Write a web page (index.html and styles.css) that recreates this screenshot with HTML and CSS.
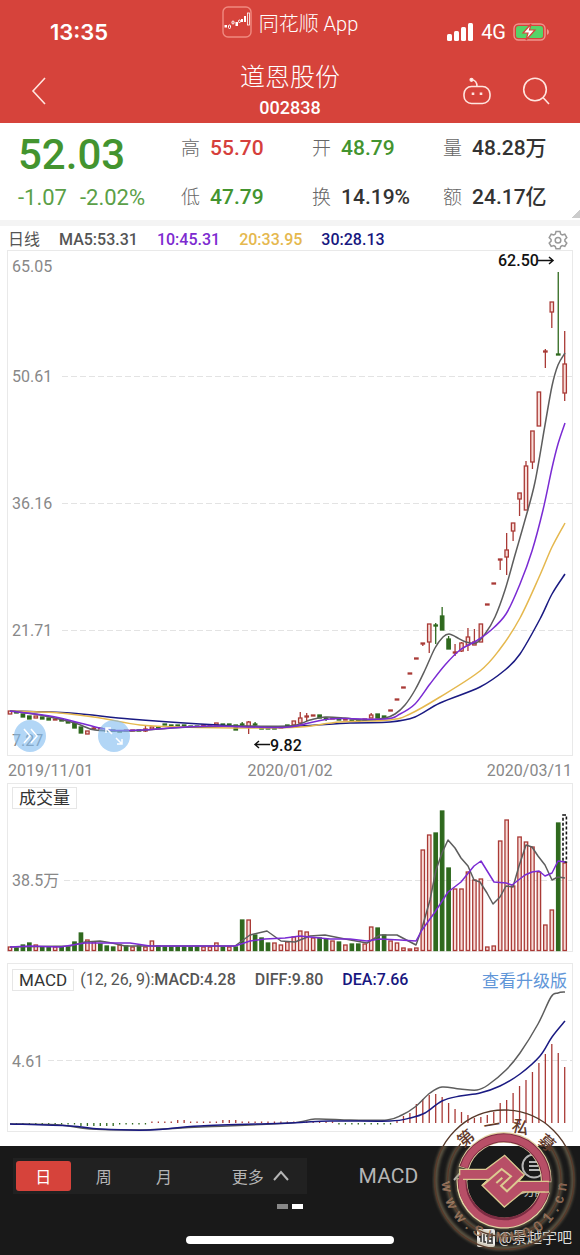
FILE: index.html
```html
<!DOCTYPE html>
<html lang="zh-CN">
<head>
<meta charset="utf-8">
<meta name="viewport" content="width=device-width, initial-scale=1">
<title>道恩股份 002838</title>
<link rel="stylesheet" href="styles.css">
</head>
<body>
<header class="top">
  <div class="status">
    <span class="clock">13:35</span>
    <span class="app">
      <svg class="app-logo" viewBox="0 0 30 32" aria-hidden="true">
        <rect x="1" y="1" width="28" height="30" rx="5" fill="none" stroke="#f08a80" stroke-width="1.4"/>
        <g fill="#fff"><rect x="2.5" y="19" width="2.5" height="2.5"/><rect x="13.5" y="16" width="2.5" height="4"/><rect x="19" y="13" width="2" height="3"/><rect x="22" y="10" width="2" height="6"/></g>
        <g fill="none" stroke="#fff"><rect x="6.5" y="19" width="2" height="3.5" rx="1"/><rect x="10" y="15" width="2" height="3" rx="1"/><rect x="16.5" y="14" width="2" height="2.5" rx="1"/><rect x="25.5" y="7" width="2" height="12" stroke-width=".8"/></g>
      </svg>
      同花顺 App
    </span>
    <span class="signal">
      <svg width="27" height="18" viewBox="0 0 27 18" aria-hidden="true"><g fill="#fff"><rect x="0" y="11" width="5" height="7" rx="1.5"/><rect x="7" y="8" width="5" height="10" rx="1.5"/><rect x="14" y="4" width="5" height="14" rx="1.5"/><rect x="21" y="0" width="5" height="18" rx="1.5"/></g></svg>
      <span class="net">4G</span>
      <svg width="37" height="18" viewBox="0 0 37 18" aria-hidden="true"><rect x="1" y="1" width="31" height="16" rx="4.5" fill="none" stroke="#f0958e" stroke-width="1.4"/><rect x="3" y="3" width="27" height="12" rx="2.5" fill="#55d468"/><path d="M34 6v6q2-1 2-3t-2-3z" fill="#f0958e"/><path d="M18 1 10 10h5l-2 7 9-10h-5.500z" fill="#fff" stroke="#d6433b" stroke-width="1.200"/></svg>
    </span>
  </div>
  <nav class="nav">
    <button class="icon-btn back" aria-label="返回"><svg width="18" height="30" viewBox="0 0 18 30"><path d="M15 2 3 15l12 13"/></svg></button>
    <h1 class="title">道恩股份<small class="code">002838</small></h1>
    <div class="nav-right">
      <button class="icon-btn" aria-label="助手"><svg width="30" height="28" viewBox="0 0 30 28"><rect x="2" y="9.500" width="26" height="17" rx="7.500"/><path d="M15 9.500C15 5.500 13 3 10 3"/><circle cx="9.500" cy="2.800" r="1.300" fill="#fff"/><path d="M11 15.500v2.500M19 15.500v2.500" stroke-width="2.600"/></svg></button>
      <button class="icon-btn" aria-label="搜索"><svg width="28" height="28" viewBox="0 0 28 28"><circle cx="13" cy="12.500" r="11.300"/><path d="m21 20.500 6 6.500"/></svg></button>
    </div>
  </nav>
</header>

<main>
  <section class="quote">
    <div class="last">
      <strong class="price">52.03</strong>
      <span class="change"><span>-1.07</span><span>-2.02%</span></span>
    </div>
    <dl class="stats">
      <div><dt>高</dt><dd class="up">55.70</dd></div>
      <div><dt>开</dt><dd class="down">48.79</dd></div>
      <div><dt>量</dt><dd>48.28万</dd></div>
      <div><dt>低</dt><dd class="down">47.79</dd></div>
      <div><dt>换</dt><dd>14.19%</dd></div>
      <div><dt>额</dt><dd>24.17亿</dd></div>
    </dl>
  </section>

  <div class="ma-row">
    <span class="period">日线</span>
    <span class="ma5">MA5:53.31</span>
    <span class="ma10">10:45.31</span>
    <span class="ma20">20:33.95</span>
    <span class="ma30">30:28.13</span>
    <button class="gear" aria-label="设置"><svg width="20" height="20" viewBox="0 0 20 20"><path d="M8 1.500h4l.7 2.600 1.500.9 2.600-.8 2 3.400-1.900 1.900v1.600l1.900 1.900-2 3.400-2.600-.8-1.500.9-.7 2.300H8l-.7-2.300-1.500-.9-2.600.8-2-3.400 1.900-1.900V9.500L1.200 7.600l2-3.400 2.600.8 1.500-.9z"/><circle cx="10" cy="10.200" r="2.800"/></svg></button>
  </div>

  <section class="panel price-panel">
    <svg class="chart" viewBox="8 251 564 504" role="img" aria-label="日线">
      <path class="grid" d="M62 376.500H572M62 503.500H572M62 630.500H572"/>
      <g class="axis"><text x="12" y="272">65.05</text><text x="12" y="382">50.61</text><text x="12" y="509">36.16</text><text x="12" y="636">21.71</text><text x="12" y="746">7.27</text></g>
      <g id="candles"></g>
      <g id="price-lines"></g>
      <text class="mark" x="498" y="266">62.50</text>
      <path class="arrow" d="M538 260.500h15m-4-3.500 4 3.500-4 3.500"/>
      <text class="mark" x="270" y="751">9.82</text>
      <path class="arrow" d="M270 744.500h-15m4-3.500-4 3.500 4 3.500"/>
    </svg>
    <button class="bubble bubble-next" aria-label="快进"><svg width="32" height="32" viewBox="0 0 32 32"><path d="m10 9 6 7-6 7m7-14 6 7-6 7"/></svg></button>
    <button class="bubble bubble-full" aria-label="全屏"><svg width="32" height="32" viewBox="0 0 32 32"><path d="m14 14-6-6m0 5V8h5m5 10 6 6m0-5v5h-5"/></svg></button>
  </section>

  <div class="dates"><time>2019/11/01</time><time>2020/01/02</time><time>2020/03/11</time></div>

  <section class="panel">
    <div class="panel-head volume-head"><span class="tag">成交量</span></div>
    <svg class="chart" viewBox="8 812 564 139" role="img" aria-label="成交量">
      <path class="grid" d="M64 880.500H572"/>
      <text class="axis" x="12" y="886">38.5万</text>
      <g id="volume"></g>
      <g id="volume-lines"></g>
    </svg>
  </section>

  <section class="panel macd-panel">
    <div class="panel-head macd-head">
      <span class="tag">MACD</span>
      <span class="macd-values"><span><span class="params">(12, 26, 9):</span>MACD:4.28</span><span>DIFF:9.80</span><span class="dea">DEA:7.66</span></span>
      <a class="upgrade" href="#upgrade">查看升级版</a>
    </div>
    <svg class="chart" viewBox="8 995 564 136" role="img" aria-label="MACD">
      <path class="grid" d="M48 1060.500H572"/>
      <text class="axis" x="12" y="1067">4.61</text>
      <g id="macd"></g>
      <g id="macd-lines"></g>
    </svg>
  </section>
</main>

<footer class="bottom">
  <div class="tools">
    <div class="periods">
      <button class="period-btn active">日</button>
      <button class="period-btn">周</button>
      <button class="period-btn">月</button>
      <button class="period-btn more">更多 <svg width="18" height="12" viewBox="0 0 18 12" aria-hidden="true"><path d="m2 10 7-8 7 8"/></svg></button>
    </div>
    <button class="indicator">MACD <svg width="18" height="12" viewBox="0 0 18 12" aria-hidden="true"><path d="m2 10 7-8 7 8"/></svg></button>
    <button class="feature"><svg width="26" height="26" viewBox="0 0 26 26" aria-hidden="true"><circle cx="13" cy="13" r="11.500"/><path d="M8 9h11M8 13h9M8 17h11"/></svg>功能</button>
  </div>
  <div class="pager"><i></i><i class="on"></i></div>
  <div class="home"></div>
  <span class="author">
    <svg width="18" height="18" viewBox="0 0 18 18" aria-hidden="true"><rect width="18" height="18" rx="2" fill="#eee"/><path d="M4 4v9M2 8l2-1M7 5v8h2M11 4v9M15 4v9M9 7h7M11 10h4M10 14h6" stroke="#222" stroke-width="1.400" fill="none"/></svg>
    @景越宇吧
  </span>
  <svg class="seal" viewBox="95 35 435 435" role="img" aria-label="第一私募">
    <defs>
      <filter id="glow" x="-20%" y="-20%" width="140%" height="140%"><feGaussianBlur stdDeviation="5"/></filter>
      <clipPath id="dark"><rect x="95" y="153" width="435" height="317"/></clipPath>
    </defs>
    <g clip-path="url(#dark)"><g fill="none" stroke="#a89a74" stroke-width="12" opacity=".5" filter="url(#glow)"><circle cx="312" cy="253" r="206"/><circle cx="312" cy="253" r="169"/><circle cx="311" cy="258" r="139"/></g></g>
    <g fill="none" stroke="#57392a" stroke-width="4"><circle cx="312" cy="253" r="209"/><path d="M181 145A170 170 0 1 0 443 145"/></g>
    <g fill="none" stroke="#e3d5a4" stroke-width="32">
      <path d="M190 218A126 126 0 0 1 437 260"/>
      <path d="M185 250A126 126 0 0 0 433 288"/>
    </g>
    <g fill="none" stroke="#7c2c42" stroke-width="27">
      <path d="M190 216A127 127 0 0 1 438 258"/>
      <path d="M185 252A127 127 0 0 0 434 288"/>
    </g>
    <g fill="none" stroke="#b84f67" stroke-width="21">
      <path d="M191 215A126 126 0 0 1 437 258"/>
      <path d="M185 252A126 126 0 0 0 433 290"/>
    </g>
    <path d="M178 222H257L313 180 372 238 355 258H444V290H367L312 335 245 270 265 252H178z" fill="#b84f67" stroke="#dccb91" stroke-width="4"/>
    <path d="M434 261h12v27h-12zM176 240h12v20h-12z" fill="#b84f67"/>
    <path d="M248 269 304 221 332 243 302 271 320 288 367 243M288 263 306 247" fill="none" stroke="#dccb91" stroke-width="6"/>
    <g class="seal-name"><text transform="translate(197 130) rotate(-40)">第</text><text transform="translate(275 91) rotate(-10)">一</text><text transform="translate(360 96) rotate(14)">私</text><text transform="translate(438 144) rotate(40)">募</text></g>
    <g class="seal-url">
      <text x="312" y="440" transform="rotate(83 312 253)">w</text>
      <text x="312" y="440" transform="rotate(66 312 253)">w</text>
      <text x="312" y="440" transform="rotate(50 312 253)">w</text>
      <text x="312" y="440" transform="rotate(38 312 253)">.</text>
      <text x="312" y="440" transform="rotate(27 312 253)">S</text>
      <text x="312" y="440" transform="rotate(15 312 253)">I</text>
      <text x="312" y="440" transform="rotate(3 312 253)">M</text>
      <text x="312" y="440" transform="rotate(-11 312 253)">U</text>
      <text x="312" y="440" transform="rotate(-23 312 253)">0</text>
      <text x="312" y="440" transform="rotate(-36 312 253)">0</text>
      <text x="312" y="440" transform="rotate(-49 312 253)">1</text>
      <text x="312" y="440" transform="rotate(-60 312 253)">.</text>
      <text x="312" y="440" transform="rotate(-70 312 253)">c</text>
      <text x="312" y="440" transform="rotate(-83 312 253)">n</text>
    </g>
  </svg>
</footer>
<script src="chart.js"></script>
</body>
</html>
```

FILE: styles.css
```css
* { box-sizing: border-box; }
body {
  margin: 0;
  background: #fff;
  color: #333;
  font-family: Roboto, "Noto Sans CJK SC", sans-serif;
  font-size: 16px;
}
button { margin: 0; padding: 0; border: 0; background: none; font: inherit; color: inherit; }
button svg { display: block; fill: none; stroke: currentColor; }
h1, dl, dd { margin: 0; }

/* header */
.top { background: #d6433b; color: #fff; padding-bottom: 2px; }
.status { display: grid; grid-template-columns: 1fr auto 1fr; height: 61px; padding: 0 30px; }
.clock { padding-left: 20px; font: 600 22px/64px Inter, sans-serif; }
.app { display: flex; gap: 7px; align-items: center; height: 44px; font-size: 20px; font-weight: 300; white-space: nowrap; }
.app-logo { width: 30px; height: 32px; }
.signal { display: flex; gap: 7px; align-items: center; justify-content: flex-end; height: 64px; }
.net { font-size: 20px; }
.nav { display: grid; grid-template-columns: 1fr auto 1fr; align-items: center; padding: 0 30px; }
.title { display: flex; flex-direction: column; align-items: center; font-size: 25px; line-height: 34px; font-weight: 300; }
.code { font-size: 18px; line-height: 26px; font-weight: 500; }
.nav-right { display: flex; gap: 30px; justify-content: flex-end; align-items: center; }
.icon-btn { color: #ffe5df; }
.icon-btn svg { stroke-width: 1.6; }

/* quote */
.quote { display: grid; grid-template-columns: 163fr 399fr; padding: 4px 0 6px 18px; border-bottom: 6px solid #f4f4f4; background: linear-gradient(135deg, transparent 50%, #ccc 50%) right 0 bottom 2px / 8px 8px no-repeat; }
.last { display: flex; flex-direction: column; }
.price { color: #43942f; font-size: 42px; line-height: 55px; font-weight: 500; }
.change { display: flex; gap: 13px; color: #5b9f48; font-size: 22px; line-height: 32px; }
.stats { display: grid; grid-template-columns: 131fr 131fr 137fr; align-content: space-between; padding: 5px 0 0; }
.stats div { display: flex; gap: 10px; align-items: baseline; line-height: 32px; white-space: nowrap; }
.stats dt { color: #666; font-size: 19px; font-weight: 300; }
.stats dd { font-size: 21px; font-weight: 500; }
.stats .up { color: #d63f3c; }
.stats .down { color: #43942f; }

/* moving averages */
.ma-row { display: flex; gap: 19px; align-items: center; height: 24px; padding: 4px 12px 0 8px; font-weight: 500; color: #555; line-height: 20px; }
.period { font-weight: 400; }
.ma10 { color: #7d2ad0; }
.ma20 { color: #e5b84e; }
.ma30, .dea { color: #17177f; }
.gear { margin-left: auto; color: #999; }
.gear svg { stroke-width: 1.5; }

/* charts */
.panel { position: relative; margin: 0 7px; border: 1px solid #e9e9e9; }
.chart { display: block; width: 100%; height: auto; overflow: visible; }
.grid { fill: none; stroke: #e3e3e3; stroke-dasharray: 6 3; }
.axis { fill: #888; font-size: 16px; }
.mark { fill: #111; font-size: 16px; font-weight: 500; }
.arrow { fill: none; stroke: #111; stroke-width: 1.5; }
.red { fill: #f8dcd8; stroke: #a93a36; stroke-width: 1.3; }
.green { fill: #2f691e; stroke: #2f691e; stroke-width: 1.3; }
.line { fill: none; stroke-width: 1.5; stroke-linejoin: round; }
.gray { stroke: #5d5d5d; }
.purple { stroke: #7a2bd3; }
.gold { stroke: #e5b84e; }
.navy { stroke: #1a1a82; }
.pending { fill: none; stroke: #111; stroke-width: 1.6; stroke-dasharray: 3 2; }
.bubble { position: absolute; bottom: 3px; width: 32px; height: 32px; border-radius: 50%; background: rgb(126 187 240 / 60%); color: #fff; }
.bubble svg { stroke-width: 1.5; }
.bubble-next { left: 1%; }
.bubble-full { left: 16%; }
.dates { display: flex; justify-content: space-between; padding: 0 8px; color: #888; line-height: 30px; height: 27px; }
.panel-head { display: flex; align-items: center; padding: 0 5px 0 4px; }
.volume-head { height: 28px; }
.macd-head { height: 31px; }
.tag { padding: 0 6px; border: 1px solid #e6e6e6; font-size: 17px; line-height: 20px; color: #333; }
.macd-panel { margin-top: 11px; margin-bottom: 14px; }
.macd-values { display: flex; gap: 19px; margin-left: 6px; font-weight: 500; color: #555; }
.params { font-weight: 400; }
.upgrade { margin-left: auto; color: #6196d8; font-size: 17px; text-decoration: none; }

/* bottom bar */
.bottom { position: relative; background: #191919; color: #b5b5b5; padding: 12px 13px 11px; }
.tools { display: flex; align-items: center; height: 36px; }
.periods { display: flex; width: 53%; height: 36px; padding: 3px; background: #212121; }
.period-btn { flex: 0 0 19%; margin-right: 2%; border-radius: 3px; font-size: 16px; }
.period-btn.active { background: #d6433b; color: #fff; }
.more { display: flex; flex: 1; gap: 8px; align-items: center; justify-content: flex-end; padding-right: 8px; }
.bottom button svg { stroke-width: 2; }
.indicator { display: flex; gap: 34px; align-items: center; margin-left: 52px; font-size: 21px; }
.feature { display: flex; flex-direction: column; align-items: center; margin-left: auto; margin-right: 19px; font-size: 14px; }
.pager { display: flex; gap: 4px; justify-content: center; margin-top: 10px; }
.pager i { width: 11px; height: 5px; background: #888; }
.pager .on { background: #fff; }
.home { width: 208px; height: 8px; margin: 27px auto 0; border-radius: 4px; background: #fff; }
.author { position: absolute; right: 8px; bottom: 6px; display: flex; gap: 4px; align-items: center; font-size: 15px; line-height: 22px; color: #ddd; }
.seal { position: absolute; right: 3px; bottom: 3px; width: 145px; height: 145px; pointer-events: none; }
.seal-name { font-size: 50px; font-weight: 500; fill: #633b2b; text-anchor: middle; dominant-baseline: central; }
.seal-url { font-family: "Liberation Sans", sans-serif; font-size: 42px; fill: #875248; stroke: #b2a17b; stroke-width: 1; text-anchor: middle; }
```

FILE: chart.js
```js
const NS = "http://www.w3.org/2000/svg";
const xAt = i => 10 + i * 6.45;

function add(parent, tag, attrs) {
  const el = document.createElementNS(NS, tag);
  for (const key in attrs) el.setAttribute(key, attrs[key]);
  document.getElementById(parent).append(el);
}

function line(parent, color, values, smooth) {
  const p = values.trim().split(" ").map(s => s.split(",").map(Number));
  let d = "M" + p[0];
  for (let i = 0; i < p.length - 1; i++) {
    const a = p[i - 1] || p[i], b = p[i], c = p[i + 1], e = p[i + 2] || c;
    d += smooth
      ? `C${b[0] + (c[0] - a[0]) / 6},${b[1] + (c[1] - a[1]) / 6} ${c[0] - (e[0] - b[0]) / 6},${c[1] - (e[1] - b[1]) / 6} ${c}`
      : "L" + c;
  }
  add(parent, "path", { d, class: "line " + color });
}

// index, colour, body top, body bottom, wick top, wick bottom
const candles = `0 r 711 714|1 g 712 713|2 g 714 717|3 g 716 719|4 r 716 718|5 g 717 719|6 g 718 720|7 r 719 720
8 g 719 721|9 g 721 723|10 g 723 728|11 g 727 733|12 r 731 734|13 r 728 729 726 730|14 r 728 729|15 g 730 731|16 g 730 731|17 g 731 732|18 r 730 731|19 r 730 731
20 g 730 731|21 r 729 731 726 732|22 r 727 729|23 g 727 728|24 g 724 725|25 g 725 726|26 g 725 726|27 g 725 726|28 g 726 727|29 g 726 727|30 r 725 726|31 r 725 726
32 r 723 725|33 g 724 725|34 g 724 725|35 g 725 730|36 g 724 725 722 726|37 r 722 727 721 734|38 g 724 725 722 726|39 g 728 729|40 g 728 729|41 g 728 729|42 r 727 728|43 g 725 726
44 r 721 725|45 r 718 723 712 725|46 r 716 717 713 721|47 r 715 716|48 g 715 718|49 g 718 719 717 721|50 r 718 719|51 g 719 720|52 r 719 720|53 g 720 721|54 g 720 721|55 r 719 720
56 r 715 718 713 718|57 g 714 718|58 g 716 718|59 r 710 711|60 r 699 700|61 r 687 688|62 r 673 674|63 r 658 659|64 r 643 644 643 646|65 r 624 642 624 653
66 g 625 626 623 644|67 g 616 630 607 630|68 g 639 649 636 649|69 r 652 653 644 656|70 r 643 651 642 652|71 r 637 645 628 651|72 r 642 645 629 645|73 r 624 642
74 r 604 605|75 r 583 584|76 r 559 560 559 570|77 r 550 557 533 575|78 r 523 531 523 541|79 r 493 499 493 516|80 r 466 510 461 510|81 r 431 462 431 469
82 r 392 426|83 r 351 352 349 368|84 r 302 312 302 328|85 g 354 355 272 355|86 r 364 393 331 401`;
candles.split(/[|\n]/).forEach(row => {
  const [i, color, top, bottom, high, low] = row.split(" ");
  const cls = color === "r" ? "red" : "green";
  const x = xAt(+i);
  if (high) add("candles", "path", { d: `M${x} ${high}V${low}`, class: cls });
  add("candles", "rect", { x: x - 1.7, y: top, width: 3.4, height: bottom - top, class: cls });
});

line("price-lines", "navy", "10,711 70,713 130,719 200,724 260,727 300,726 350,723 390,722 415,717 440,703 480,687 505,670 520,654 540,619 552,594 565,574", true);
line("price-lines", "gold", "10,711 60,713 100,718 140,725 180,727 250,728 300,727 340,722 390,720 410,714 440,697 480,671 500,649 520,618 540,575 552,547 565,523", true);
line("price-lines", "gray", "10,711 40,715 75,723 95,730 130,731 160,729 190,727 240,726 290,726 310,720 325,717 345,718 365,720 385,718 395,714 405,705 415,690 425,670 435,648 443,637 449,634 456,637 466,642 476,643 485,634 495,617 505,590 515,555 525,520 535,482 545,425 552,386 558,365 565,353", true);
line("price-lines", "purple", "10,711 50,716 80,723 110,730 140,730 170,728 210,726 250,727 290,727 330,719 385,719 400,714 415,704 430,684 445,665 460,650 476,641 490,631 506,614 520,584 532,551 543,510 552,468 558,444 565,423", true);

const volumeTops = [947,948,945,943,945,947,947,947,947,947,942,933,940,942,944,946,947,945,946,947,946,947,941,946,947,947,947,947,947,947,947,947,943,947,947,947,920,920,935,938,943,943,945,942,937,931,932,938,938,939,941,942,945,944,944,944,927,928,935,941,943,948,949,948,850,835,833,811,868,889,889,872,880,879,947,946,841,820,886,837,842,847,872,925,910,823,863];
const volumeColors = "rgggrggrggggrrgggrgrgrrgggggggrrrgrggrgggrrrrrrrggrgrggrrggrrrrrrrggg" + "rrrrrrrrrrrrrrrrgr";
volumeTops.forEach((top, i) => {
  add("volume", "rect", { x: xAt(i) - 1.7, y: top, width: 3.4, height: 950.5 - top, class: volumeColors[i] === "g" ? "green" : "red" });
});
add("volume", "rect", { x: xAt(86) - 1.7, y: 815, width: 3.4, height: 47, class: "pending" });
line("volume-lines", "gray", "10,947 70,946 85,942 100,941 112,943 125,946 235,946 250,935 267,931 281,941 295,942 310,936 325,935 345,939 367,943 380,935 397,935 416,945 422,928 430,900 436,870 442,853 448,840 455,848 461,858 468,866 474,880 480,882 487,893 493,904 500,897 506,886 513,887 519,866 526,845 532,847 538,856 545,865 552,880 558,877 565,878");
line("volume-lines", "purple", "10,947 30,946 60,947 85,943 130,943 150,946 235,946 250,941 265,939 285,938 300,936 330,939 350,939 367,941 380,939 400,940 416,941 422,930 435,912 448,892 461,882 474,866 481,861 494,882 506,883 512,885 525,875 532,872 539,871 545,876 552,873 558,861 565,862");

// the first sixty sessions stay within a pixel or two of zero
for (let i = 1; i < 60; i++) {
  const below = i < 22 || i > 50;
  const size = (i > 10 && i < 17) ? 3 : [26, 27, 33, 34, 35].includes(i) ? 3 : 1.5;
  add("macd", "path", { d: below ? `M${xAt(i)} 1123v${size}` : `M${xAt(i)} 1123v-${size}`, class: below ? "green" : "red" });
}
[1121,1116,1113,1104,1099,1095,1094,1097,1103,1109,1112,1115,1118,1117,1115,1112,1103,1100,1093,1086,1080,1072,1063,1054,1044,1053,1067].forEach((top, k) => {
  add("macd", "path", { d: `M${xAt(60 + k)} 1123V${top}`, class: "red" });
});
line("macd-lines", "gray", "10,1124 60,1125 90,1129 140,1130 200,1127 290,1123 315,1119 350,1120 387,1120 402,1115 415,1107 430,1093 442,1087 460,1089 477,1090 488,1085 506,1070 520,1053 538,1024 551,997 558,993 565,992", true);
line("macd-lines", "navy", "10,1124 70,1126 100,1129 150,1130 200,1126 290,1123 330,1121 390,1121 410,1118 425,1113 442,1101 460,1096 480,1093 500,1086 520,1074 540,1056 552,1037 565,1021", true);
```
